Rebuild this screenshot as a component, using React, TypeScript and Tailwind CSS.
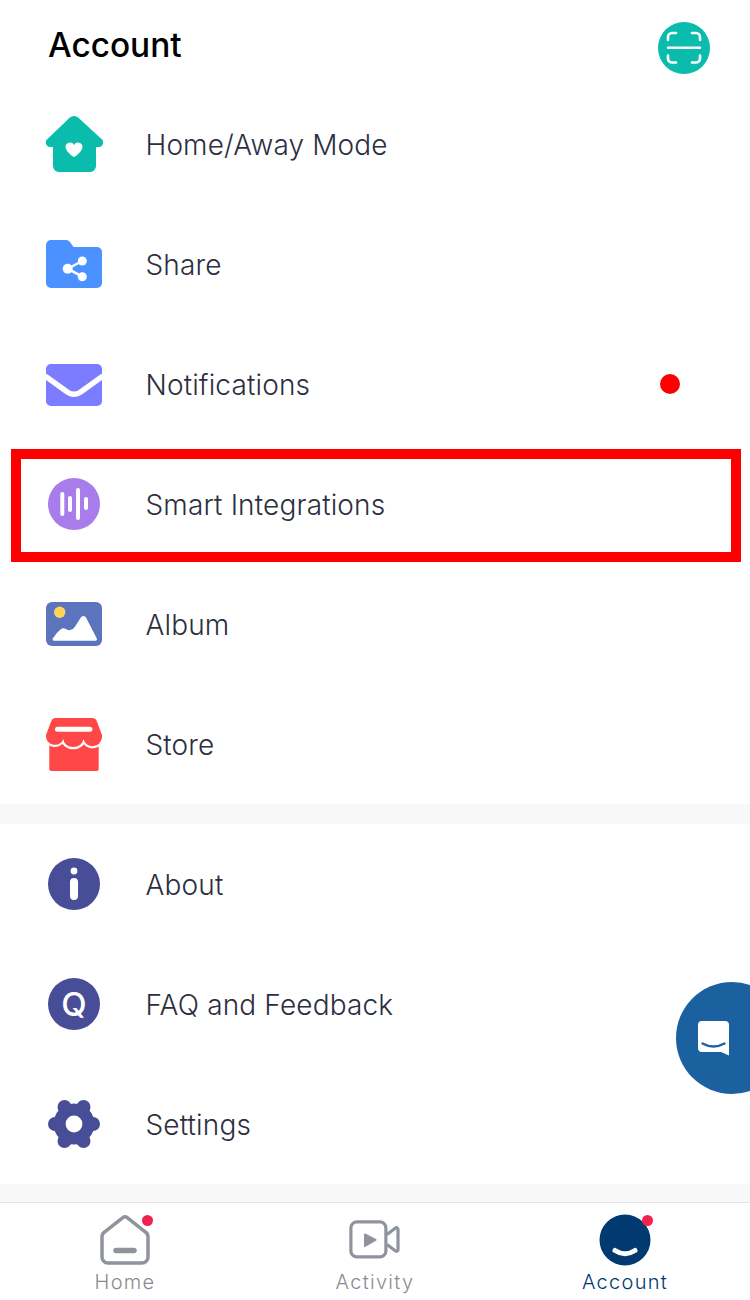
import React from "react";

const IconHome = () => (
	<svg width="57" height="56" viewBox="0 0 57 56">
		<path
			d="M23.6 1.8a6.5 6.5 0 0 1 8.8 0L55.5 23a4.5 4.5 0 0 1-3 8H50v19a6 6 0 0 1-6 6H13a6 6 0 0 1-6-6V31H4.5a4.5 4.5 0 0 1-3-8Z"
			fill="#0abcab"
		/>
		<path
			d="M28 41c-1 0-8.5-6-8.5-10a4.5 4.5 0 0 1 8.5-2 4.5 4.5 0 0 1 8.5 2c0 4-7.5 10-8.5 10z"
			fill="#fff"
		/>
	</svg>
);

const IconShare = () => (
	<svg width="56" height="56" viewBox="0 0 56 56">
		<path
			d="M0 9a5 5 0 0 1 5-5h15a5 5 0 0 1 4 2l3.5 5H51a5 5 0 0 1 5 5v31a5 5 0 0 1-5 5H5a5 5 0 0 1-5-5Z"
			fill="#4b91ff"
		/>
		<path d="M36.3 25 21.7 32.7l14.6 8" fill="none" stroke="#fff" strokeWidth="2.5" />
		<circle cx="21.7" cy="32.7" r="5" fill="#fff" />
		<circle cx="36.3" cy="25" r="4.5" fill="#fff" />
		<circle cx="36.3" cy="40.7" r="4.5" fill="#fff" />
	</svg>
);

const IconMail = () => (
	<svg width="56" height="56" viewBox="0 0 56 56">
		<rect x="0" y="8" width="56" height="42" rx="5" fill="#7b7cff" />
		<path
			d="M-1 20 22 36.5q6 3.600 12 0L57 20"
			fill="none"
			stroke="#fff"
			strokeWidth="5.500"
		/>
	</svg>
);

const IconSmart = () => (
	<svg width="56" height="56" viewBox="0 0 56 56">
		<circle cx="28" cy="28" r="26" fill="#a97cec" />
		<g stroke="#fff" strokeWidth="4" strokeLinecap="round">
			<path d="M16.3 18v20" />
			<path d="M24 22v12" />
			<path d="M32 14v28" />
			<path d="M40 23v9" />
		</g>
	</svg>
);

const IconAlbum = () => (
	<svg width="56" height="56" viewBox="0 0 56 56">
		<rect x="0" y="6" width="56" height="44" rx="6" fill="#5b74bd" />
		<circle cx="13.7" cy="16.3" r="5.7" fill="#ffd457" />
		<path
			d="M8 44.700h41.500a1.500 1.500 0 0 0 1.300-2.200L40 21.500a3 3 0 0 0-5.200 0l-6 9.500q-3.500 5-8.500 2.300-3-2-5.500 0Q10 37 6.800 42.500a1.500 1.500 0 0 0 1.200 2.200Z"
			fill="#fff"
		/>
	</svg>
);

const storeAwning =
	"M9 2h38a4 4 0 0 1 3.500 2.500L56 19v2a9.500 9.500 0 0 1-18.700 2 10 8 0 0 1-20 0A9 9 0 0 1 0 21v-2L5.500 4.500A4 4 0 0 1 9 2Z";

const IconStore = () => (
	<svg width="56" height="56" viewBox="0 0 56 56">
		<rect x="3.300" y="25" width="49.400" height="30" rx="2" fill="#ff4747" />
		<path d={storeAwning} fill="#fff" stroke="#fff" strokeWidth="4.500" />
		<path d={storeAwning} fill="#ff4747" />
		<rect x="9" y="10.700" width="37.400" height="5" rx="2.500" fill="#fff" />
	</svg>
);

const IconAbout = () => (
	<svg width="56" height="56" viewBox="0 0 56 56">
		<circle cx="28" cy="28" r="26" fill="#474e97" />
		<circle cx="28" cy="15" r="3.400" fill="#fff" />
		<rect x="24" y="22" width="8" height="22" rx="4" fill="#fff" />
	</svg>
);

const IconFaq = () => (
	<svg width="56" height="56" viewBox="0 0 56 56">
		<circle cx="28" cy="28" r="26" fill="#474e97" />
		<text
			x="28"
			y="39.500"
			textAnchor="middle"
			fontFamily="Inter, sans-serif"
			fontSize="33"
			fontWeight="500"
			fill="#fff"
		>
			Q
		</text>
	</svg>
);

const IconSettings = () => (
	<svg width="56" height="56" viewBox="0 0 56 56">
		<g fill="#474e97">
			<circle cx="28" cy="28" r="20.500" />
			<circle cx="9" cy="28" r="7" />
			<circle cx="47" cy="28" r="7" />
			<circle cx="18.500" cy="11" r="7" />
			<circle cx="37.500" cy="11" r="7" />
			<circle cx="18.500" cy="45" r="7" />
			<circle cx="37.500" cy="45" r="7" />
		</g>
		<circle cx="28" cy="28" r="8.400" fill="#fff" />
	</svg>
);

const IconScan = () => (
	<svg width="52" height="52" viewBox="0 0 52 52">
		<circle cx="26" cy="26" r="26" fill="#0abcab" />
		<g fill="none" stroke="#fff" strokeWidth="2.600" strokeLinecap="round">
			<path d="M10 25.800h32" />
			<path d="M10 18v-3a4 4 0 0 1 4-4h4" />
			<path d="M34 11h4a4 4 0 0 1 4 4v3" />
			<path d="M10 33.500v3a4 4 0 0 0 4 4h4" />
			<path d="M34 40.500h4a4 4 0 0 0 4-4v-3" />
		</g>
	</svg>
);

const TabHome = () => (
	<svg width="52" height="52" viewBox="0 0 52 52">
		<path
			d="M23.500 3.800a4 4 0 0 1 5 0L46.500 18a6 6 0 0 1 2.500 5v20a6 6 0 0 1-6 6H9a6 6 0 0 1-6-6V23a6 6 0 0 1 2.500-5Z"
			fill="none"
			stroke="#8f939c"
			strokeWidth="3.500"
		/>
		<path d="M17 36.500h18" stroke="#8f939c" strokeWidth="5.500" strokeLinecap="round" />
	</svg>
);

const TabActivity = () => (
	<svg width="52" height="52" viewBox="0 0 52 52">
		<g fill="none" stroke="#8f939c" strokeWidth="3.200" strokeLinejoin="round">
			<rect x="1.900" y="7.900" width="35" height="35" rx="6" />
			<path d="M38 20.500 46.500 14a1.600 1.600 0 0 1 2.500 1.300v20.400a1.600 1.600 0 0 1-2.500 1.300L38 30.500" />
		</g>
		<path d="M16 20.500 26.500 26 16 32Z" fill="#8f939c" stroke="#8f939c" strokeWidth="2" strokeLinejoin="round" />
	</svg>
);

const TabAccount = () => (
	<svg width="52" height="52" viewBox="0 0 52 52">
		<circle cx="26" cy="26" r="25.500" fill="#003a70" />
		<path d="M16 36.500q10 6.500 20 0" fill="none" stroke="#fff" strokeWidth="5" strokeLinecap="round" />
	</svg>
);

const topItems = [
	{ label: "Home/Away Mode", icon: <IconHome /> },
	{ label: "Share", icon: <IconShare /> },
	{ label: "Notifications", icon: <IconMail />, dot: true },
	{ label: "Smart Integrations", icon: <IconSmart /> },
	{ label: "Album", icon: <IconAlbum /> },
	{ label: "Store", icon: <IconStore /> },
];

const bottomItems = [
	{ label: "About", icon: <IconAbout /> },
	{ label: "FAQ and Feedback", icon: <IconFaq /> },
	{ label: "Settings", icon: <IconSettings /> },
];

type RowProps = { label: string; icon: React.ReactNode; dot?: boolean };

const Row: React.FC<RowProps> = ({ label, icon, dot }) => (
	<div className="flex h-[120px] items-center pl-[46px] pr-[70px]">
		<div className="h-14 w-14 shrink-0">{icon}</div>
		<span className="ml-[43.5px] pt-[1px] text-[28px] font-light tracking-[0.15px] text-[#2c2f40]">
			{label}
		</span>
		{dot && <span className="ml-auto h-5 w-5 rounded-full bg-[#ff0000]" />}
	</div>
);

type TabProps = { label: string; icon: React.ReactNode; badge?: boolean; active?: boolean };

const Tab: React.FC<TabProps> = ({ label, icon, badge, active }) => (
	<div className="flex flex-1 flex-col items-center pt-[11px]">
		<div className="relative h-[52px] w-[52px]">
			{icon}
			{badge && (
				<span className="absolute right-[-2px] top-[1px] h-[11px] w-[11px] rounded-full bg-[#f0234f]" />
			)}
		</div>
		<span
			className={`mt-[2px] text-[20px] font-light leading-[28px] tracking-[1.3px] ${
				active ? "text-[#003a70]" : "text-[#8a8b90]"
			}`}
		>
			{label}
		</span>
	</div>
);

export default function App() {
	return (
		<div className="relative h-[1300px] w-[750px] overflow-hidden bg-white font-['Inter',sans-serif]">
			{/* Header */}
			<div className="flex h-[84px] items-start justify-between pl-[48px] pr-[40px]">
				<h1 className="mt-[24px] text-[33.4px] font-medium leading-[42px] text-black">Account</h1>
				<div className="mt-[22px]">
					<IconScan />
				</div>
			</div>

			{topItems.map((item) => (
				<Row key={item.label} {...item} />
			))}

			<div className="h-5 bg-[#f8f8f8]" />

			{bottomItems.map((item) => (
				<Row key={item.label} {...item} />
			))}

			<div className="h-[18px] bg-[#f8f8f8]" />

			{/* Tab bar */}
			<div className="flex h-[98px] border-t border-[#e4e4e4]">
				<Tab label="Home" icon={<TabHome />} badge />
				<Tab label="Activity" icon={<TabActivity />} />
				<Tab label="Account" icon={<TabAccount />} badge active />
			</div>

			{/* Highlight frame */}
			<div className="absolute left-[11px] top-[449px] h-[113px] w-[730px] border-[10px] border-[#ff0000]" />

			{/* Chat button */}
			<div className="absolute left-[676px] top-[982px] flex h-[112px] w-[112px] rounded-full bg-[#1b619f] pl-[22px] pt-[39px]">
				<svg width="32" height="35" viewBox="0 0 32 35">
					<path
						d="M4 0h23a4 4 0 0 1 4 4v30.500L23 31H4a4 4 0 0 1-4-4V4a4 4 0 0 1 4-4Z"
						fill="#fff"
					/>
					<path
						d="M4.500 22.500q11 6 22 0"
						fill="none"
						stroke="#1b619f"
						strokeWidth="2.400"
						strokeLinecap="round"
					/>
				</svg>
			</div>
		</div>
	);
}
